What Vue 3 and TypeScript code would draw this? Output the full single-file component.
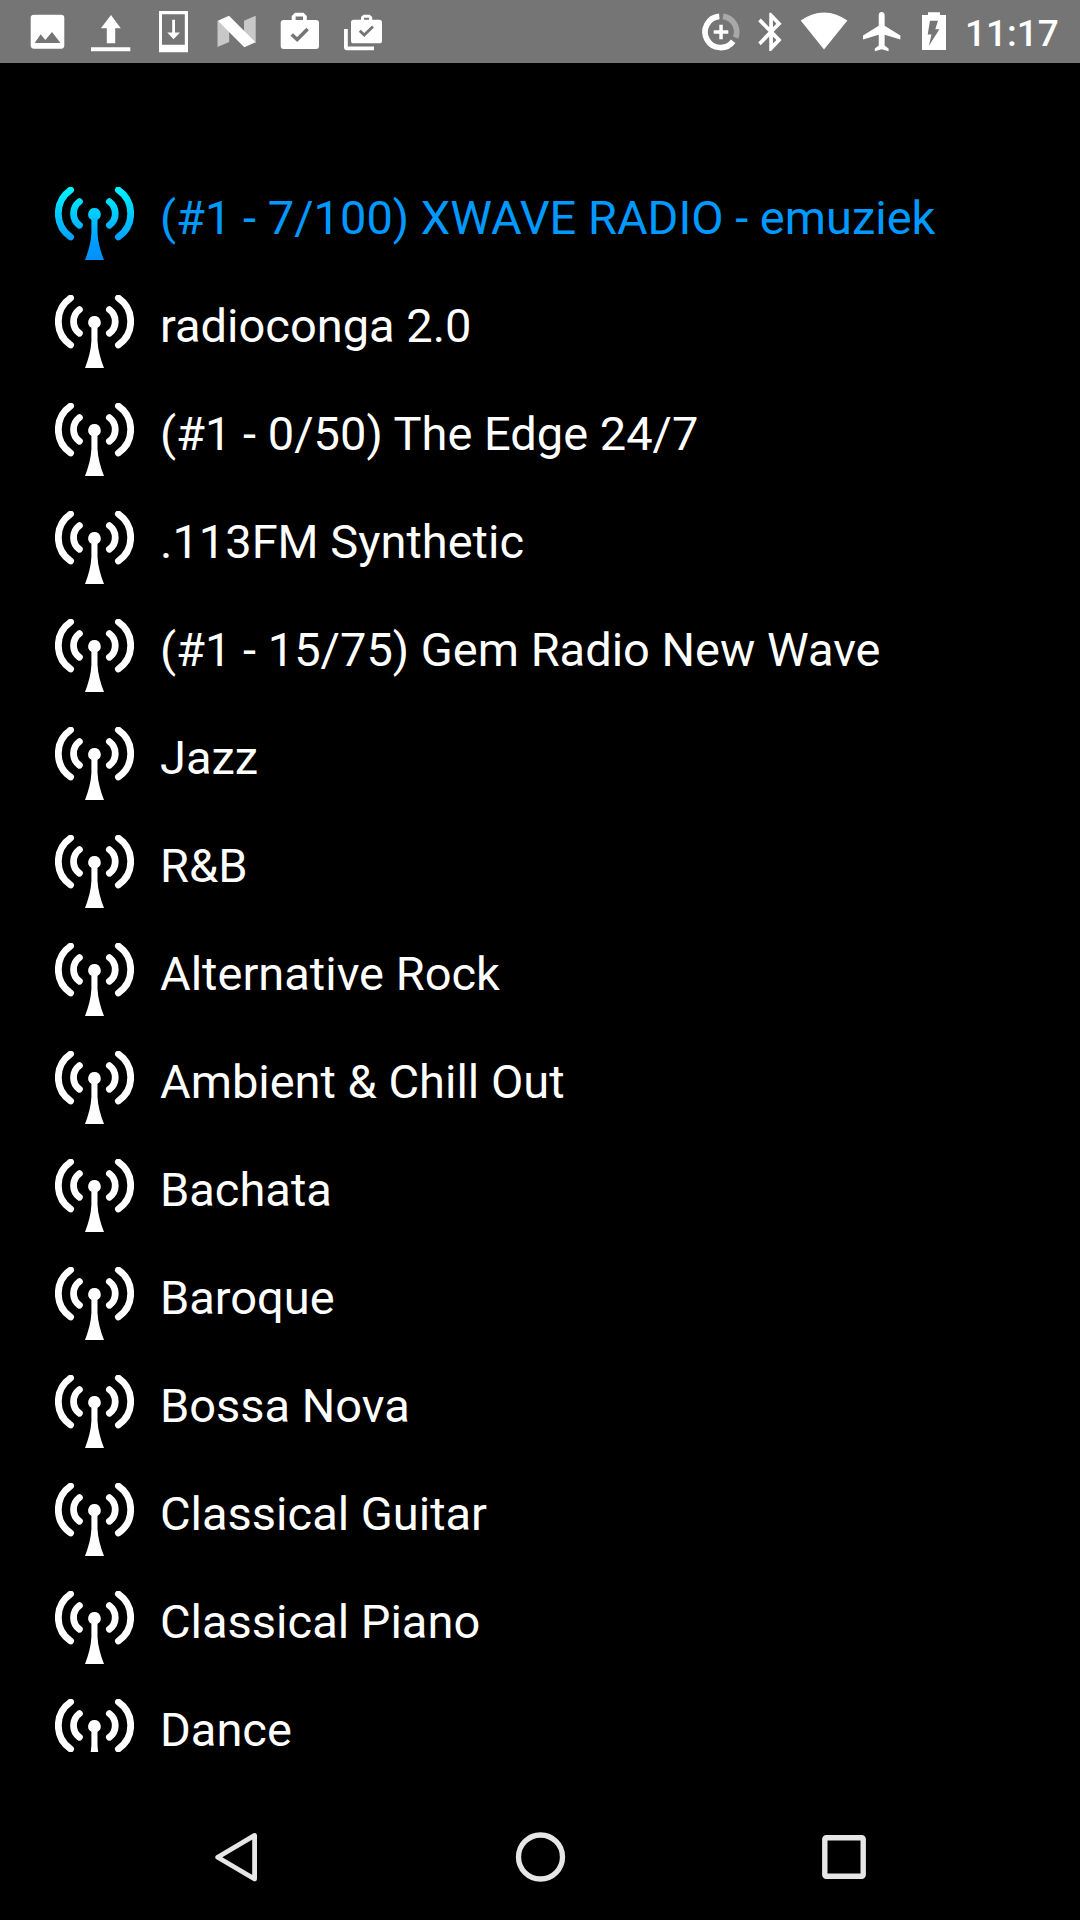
<script setup lang="ts">
interface Station {
  name: string
  active?: boolean
}

const stations: Station[] = [
  { name: '(#1 - 7/100) XWAVE RADIO - emuziek', active: true },
  { name: 'radioconga 2.0' },
  { name: '(#1 - 0/50) The Edge 24/7' },
  { name: '.113FM Synthetic' },
  { name: '(#1 - 15/75) Gem Radio New Wave' },
  { name: 'Jazz' },
  { name: 'R&B' },
  { name: 'Alternative Rock' },
  { name: 'Ambient & Chill Out' },
  { name: 'Bachata' },
  { name: 'Baroque' },
  { name: 'Bossa Nova' },
  { name: 'Classical Guitar' },
  { name: 'Classical Piano' },
  { name: 'Dance' },
]
</script>

<template>
  <div class="screen">
    <header class="status">
      <div class="notifications">
        <svg width="63" height="63" viewBox="16 0 63 63">
          <path fill-rule="evenodd" d="M34 14.7H61.3Q64.3 14.7 64.3 17.7V45.3Q64.3 48.7 61.3 48.7H34Q30.7 48.7 30.7 45.3V17.7Q30.7 14.7 34 14.7ZM34.7 43H60.5L52 32L45.3 40L40.7 34.2Z" />
        </svg>
        <svg width="63" height="63" viewBox="79 0 63 63">
          <path d="M111 15L120.8 28.3H115.2V43.3H106.8V28.3H100.9ZM91 47.2H130.3V51.3H91Z" />
        </svg>
        <svg width="63" height="63" viewBox="142 0 63 63">
          <path fill-rule="evenodd" d="M159 11H188V52.3H159ZM162 14.2V44.8H184.8V14.2Z" />
          <path d="M172.2 19.7H175V32.5H180L173.6 39.3L167.3 32.5H172.2Z" />
        </svg>
        <svg width="63" height="63" viewBox="205 0 63 63">
          <path fill="#c8c8c8" d="M217.5 20.5L229.2 30V42L217.5 47ZM244 20.7L255.7 15.7V43L244 34Z" />
          <path d="M217.8 20.7L229 15.8L255.5 42.3L244.3 47.2Z" />
        </svg>
        <svg width="63" height="63" viewBox="268 0 63 63">
          <path fill-rule="evenodd" d="M283.7 20H291.7V16L295 12.7H303.5L306.8 16V20H316Q319 20 319 23V46Q319 49 316 49H283.7Q280.7 49 280.7 46V23Q280.7 20 283.7 20ZM295.6 20H303V16.5H295.6Z" />
          <path class="tick" stroke-width="3.5" d="M291.7 34.5L297.2 39.6L307.6 29" />
        </svg>
        <svg width="63" height="63" viewBox="331 0 63 63">
          <path fill-rule="evenodd" d="M353.6 19.7H361V17L363.5 14.7H369.6L372.2 17V19.7H379.4Q382 19.7 382 22.3V40.7Q382 43.3 379.4 43.3H353.6Q351 43.3 351 40.7V22.3Q351 19.7 353.6 19.7ZM364 19.7H369V17.7H364Z" />
          <path class="tick" stroke-width="2.8" d="M359.8 30.7L364.2 35L373 26.4" />
          <path d="M344 29H347.8V46.5H374V50.3H347Q344 50.3 344 47.3Z" />
        </svg>
      </div>
      <div class="system">
        <svg width="52" height="63" viewBox="696 0 52 63">
          <g fill="none" stroke-width="5.7">
            <path stroke="#fff" d="M719.3 16.4A15.6 15.6 0 1 0 733.2 41.2" />
            <path stroke="#a8a8a8" d="M723 16.4A15.6 15.6 0 0 1 735.6 37.6" />
          </g>
          <path d="M719.3 24.8H722.8V30.3H728.3V33.7H722.8V39.2H719.3V33.7H713.7V30.3H719.3Z" />
        </svg>
        <svg width="44" height="63" viewBox="748 0 44 63">
          <path transform="translate(749 8.9) scale(1.84 1.91)" d="M17.71 7.71L12 2h-1v7.59L6.41 5 5 6.41 10.59 12 5 17.59 6.41 19 11 14.41V22h1l5.71-5.71-4.3-4.29 4.3-4.29zM13 5.83l1.88 1.88L13 9.59V5.83zm1.88 10.46L13 18.17v-3.76l1.88 1.88z" />
        </svg>
        <svg width="64" height="63" viewBox="792 0 64 63">
          <path d="M800.7 20.6A38 38 0 0 1 847.4 20.6L824 49.5Z" />
        </svg>
        <svg width="56" height="63" viewBox="856 0 56 63">
          <path transform="translate(859.1 8.1) scale(1.965)" d="M21 16v-2l-8-5V3.5c0-.83-.67-1.5-1.5-1.5S10 2.67 10 3.5V9l-8 5v2l8-2.5V19l-2 1.5V22l3.5-1 3.5 1v-1.5L13 19v-5.5l8 2.5z" />
        </svg>
        <svg width="53" height="63" viewBox="912 0 53 63">
          <path fill-rule="evenodd" d="M922 15H928V12.3H940V15H946V50H922ZM930 20.7H938L935.3 29.3H939.4L928.8 46L931.5 34.5H927.7Z" />
        </svg>
        <span class="clock">11:17</span>
      </div>
    </header>

    <main class="list">
      <div v-for="s in stations" :key="s.name" class="row" :class="{ active: s.active }">
        <div class="icon">
          <svg width="79" height="73" viewBox="0 0 79 73">
            <defs v-if="s.active">
              <linearGradient id="glow" gradientUnits="userSpaceOnUse" x1="0" y1="0" x2="0" y2="73">
                <stop offset="0" stop-color="#00f6ff" />
                <stop offset=".8" stop-color="#0098ff" />
                <stop offset="1" stop-color="#0090ff" />
              </linearGradient>
            </defs>
            <g fill="none" :stroke="s.active ? 'url(#glow)' : '#fff'" stroke-width="6.8" stroke-linecap="round">
              <path d="M15.6 3A28.6 28.6 0 0 0 15.6 50" />
              <path d="M63.4 3A28.6 28.6 0 0 1 63.4 50" />
              <path d="M24.4 14.6A14.8 14.8 0 0 0 24.4 38.2" />
              <path d="M54.4 14.6A14.8 14.8 0 0 1 54.4 38.2" />
            </g>
            <path :fill="s.active ? 'url(#glow)' : '#fff'" d="M39.4 21A6.3 6.3 0 0 1 42.5 32.8V46C42.9 55 45.5 64 49 73H30C33.5 64 36 55 36.4 46V32.8A6.3 6.3 0 0 1 39.4 21Z" />
          </svg>
        </div>
        <span class="name">{{ s.name }}</span>
      </div>
    </main>

    <nav class="nav">
      <svg width="60" height="60" viewBox="0 0 60 60">
        <path d="M10.7 30.2L47.6 8.4V52Z" stroke-width="4.8" stroke-linejoin="round" />
      </svg>
      <svg width="60" height="60" viewBox="0 0 60 60">
        <circle cx="29.5" cy="30" r="22" stroke-width="5.3" />
      </svg>
      <svg width="60" height="60" viewBox="0 0 60 60">
        <rect x="10.8" y="10.8" width="38.4" height="38.4" rx="1.5" stroke-width="5.4" />
      </svg>
    </nav>
  </div>
</template>

<style>
body {
  background: #000;
}
</style>

<style scoped>
.screen {
  width: 1080px;
  height: 1920px;
  display: flex;
  flex-direction: column;
  background: #000;
  color: #fff;
  font-family: Roboto, "Noto Sans", sans-serif;
  overflow: hidden;
}
svg {
  display: block;
  flex: none;
}
.status {
  height: 63px;
  flex: none;
  display: flex;
  justify-content: space-between;
  padding-left: 16px;
  background: #757575;
}
.status svg {
  fill: #fff;
}
.notifications,
.system {
  display: flex;
}
.system {
  width: 384px;
}
.status .tick {
  fill: none;
  stroke: #757575;
}
.clock {
  font-size: 37px;
  font-weight: 500;
  line-height: 67px;
}
.list {
  height: 1623px;
  flex: none;
  margin-top: 108px;
}
.row {
  height: 108px;
  box-sizing: border-box;
  display: flex;
  align-items: flex-start;
  gap: 26px;
  padding: 16px 0 0 55px;
}
.icon {
  width: 79px;
  height: 73px;
  flex: none;
  overflow: hidden;
}
.row:last-child .icon {
  height: 53px;
}
.name {
  font-size: 47px;
  line-height: 61px;
  white-space: pre;
}
.active .name {
  color: #0099ff;
}
.nav {
  height: 126px;
  flex: none;
  display: flex;
  align-items: center;
  justify-content: space-between;
  padding: 0 206px 0 207px;
}
.nav svg {
  fill: none;
  stroke: #e6e6e6;
}
</style>
